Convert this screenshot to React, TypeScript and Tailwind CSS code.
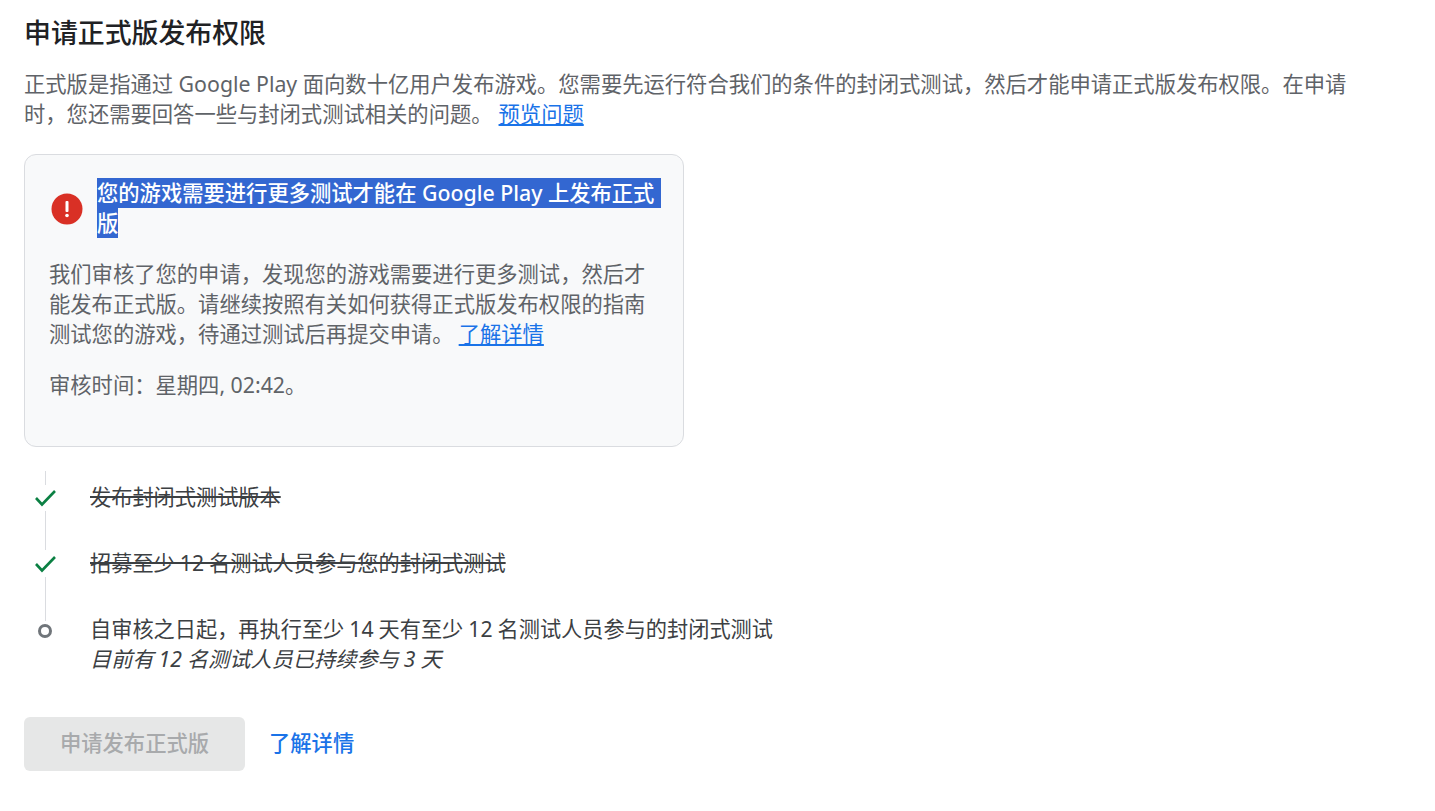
function Check() {
  return (
    <svg width="24" height="26" viewBox="0 0 24 26" fill="none" className="block">
      <path d="M3 13 L9 19.5 L22 6" stroke="#0b8043" strokeWidth="2.6" />
    </svg>
  );
}

function Line({ h }: { h: string }) {
  return <div className={`w-px bg-[#dadce0] ${h}`} />;
}

export default function App() {
  return (
    <div className="min-h-[811px] bg-white pl-6 pt-[15px] font-['Noto_Sans','Noto_Sans_CJK_SC',sans-serif] text-[21.3px] leading-[30px] text-[#5f6368]">
      <h1 className="text-[26.9px] leading-9 font-medium text-[#202124]">申请正式版发布权限</h1>
      <p className="mt-[18px] w-[1330px]">
        正式版是指通过 Google Play 面向数十亿用户发布游戏。您需要先运行符合我们的条件的封闭式测试，然后才能申请正式版发布权限。在申请时，您还需要回答一些与封闭式测试相关的问题。
        <a className="ml-[6px] text-[#1a73e8] underline">预览问题</a>
      </p>

      <div className="mt-[25px] h-[293px] w-[660px] rounded-xl border border-[#dadce0] bg-[#f8f9fa] pl-6 pr-5 pt-[23px]">
        <div className="flex items-center">
          <svg width="32" height="32" viewBox="0 0 32 32" className="mt-[1px] ml-[2px] shrink-0">
            <circle cx="16" cy="16" r="15.5" fill="#d93025" />
            <rect x="14.5" y="8" width="3" height="11" rx="1" fill="#fff" />
            <circle cx="16" cy="22.5" r="1.8" fill="#fff" />
          </svg>
          <h2 className="ml-[14px] font-medium text-white">
            <span className="block w-[564px] bg-[#3367d1]">您的游戏需要进行更多测试才能在 Google Play 上发布正式</span>
            <span className="block w-fit bg-[#3367d1]">版</span>
          </h2>
        </div>
        <p className="mt-[21px]">
          我们审核了您的申请，发现您的游戏需要进行更多测试，然后才能发布正式版。请继续按照有关如何获得正式版发布权限的指南测试您的游戏，待通过测试后再提交申请。
          <a className="ml-[5px] text-[#1a73e8] underline">了解详情</a>
        </p>
        <p className="mt-[21px]">审核时间：星期四, 02:42。</p>
      </div>

      <div className="mt-6 flex text-[21.2px] text-[#3c4043] [word-spacing:-0.5px]">
        <div className="flex w-[42px] flex-col items-center">
          <Line h="h-[14px]" />
          <Check />
          <Line h="h-[39px]" />
          <div className="mt-px"><Check /></div>
          <Line h="h-[44px]" />
          <div className="mt-[3px] size-[14px] rounded-full border-[3px] border-[#70757a]" />
        </div>
        <div className="ml-6 pt-[11px]">
          <div className="line-through">发布封闭式测试版本</div>
          <div className="mt-9 line-through">招募至少 12 名测试人员参与您的封闭式测试</div>
          <div className="mt-9">自审核之日起，再执行至少 14 天有至少 12 名测试人员参与的封闭式测试</div>
          <div className="italic">目前有 12 名测试人员已持续参与 3 天</div>
        </div>
      </div>

      <div className="mt-[43px] flex items-center">
        <button className="h-[54px] w-[221px] rounded-md bg-[#e6e7e7] pb-0.5 font-medium text-[#a8aaac]">申请发布正式版</button>
        <a className="ml-6 pb-0.5 font-medium text-[#1a73e8]">了解详情</a>
      </div>
    </div>
  );
}
